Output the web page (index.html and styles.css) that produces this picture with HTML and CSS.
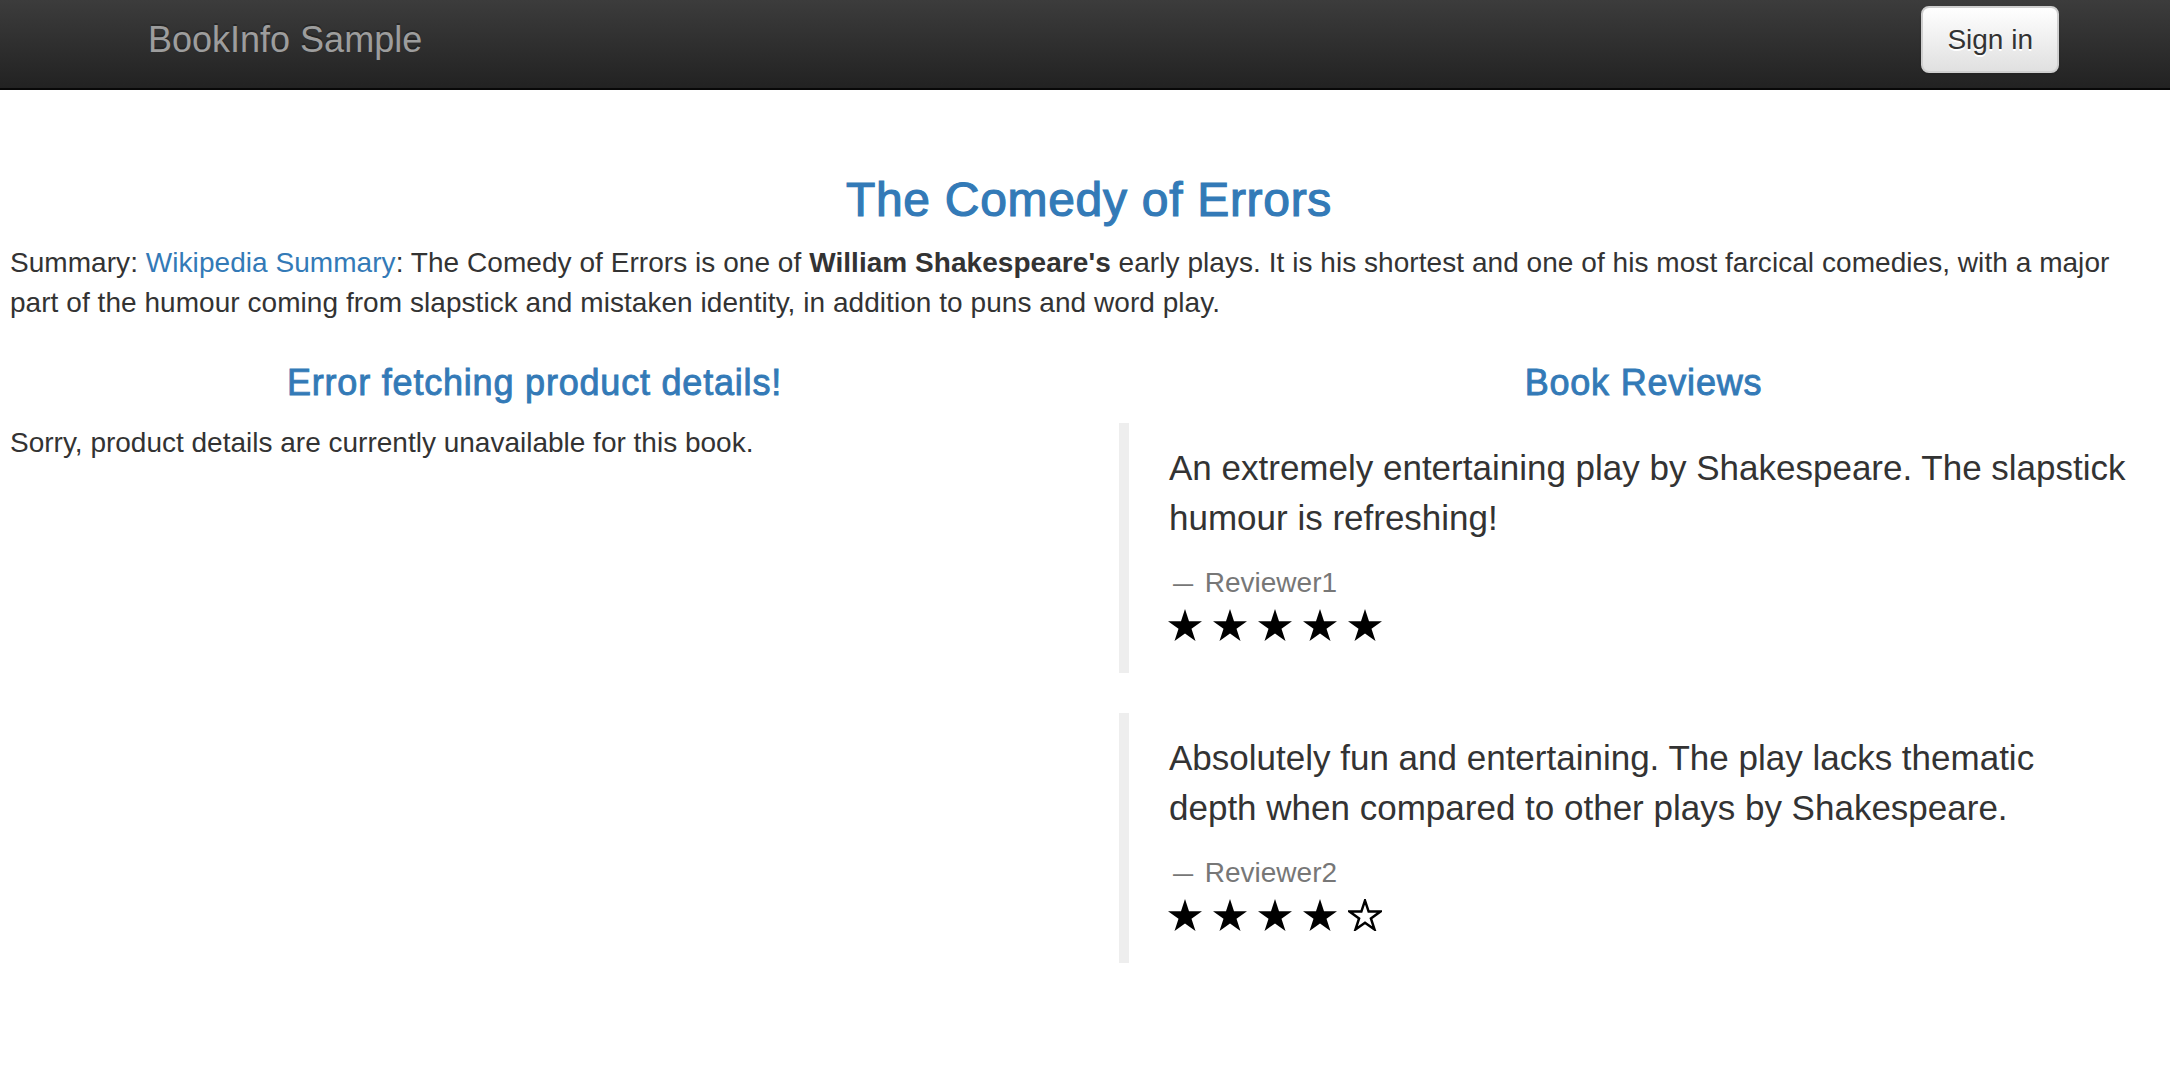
FILE: index.html
```
<!DOCTYPE html>
<html lang="en">
<head>
<meta charset="utf-8">
<title>Simple Bookstore App</title>
<link rel="stylesheet" href="styles.css">
</head>
<body>
<nav class="navbar">
  <a class="brand" href="#">BookInfo Sample</a>
  <button class="btn-signin" type="button">Sign in</button>
</nav>
<main class="page">
  <h3 class="title">The Comedy of Errors</h3>
  <p class="summary">Summary: <a class="link" href="#">Wikipedia Summary</a>: The Comedy of Errors is one of <b>William Shakespeare's</b> early plays. It is his shortest and one of his most farcical comedies, with a major part of the humour coming from slapstick and mistaken identity, in addition to puns and word play.</p>
  <div class="cols">
    <section class="col">
      <h4 class="col-title">Error fetching product details!</h4>
      <p class="plain">Sorry, product details are currently unavailable for this book.</p>
    </section>
    <section class="col">
      <h4 class="col-title">Book Reviews</h4>
      <blockquote class="review">
        <p class="review-text">An extremely entertaining play by Shakespeare. The slapstick humour is refreshing!</p>
        <small class="reviewer"><span class="dash">&mdash;</span>&nbsp;Reviewer1</small>
        <div class="stars">
          <svg class="star" viewBox="0 0 100 95" preserveAspectRatio="none"><polygon points="50,0 61.8,36.3 100,36.3 69.1,58.8 80.9,95.1 50,72.6 19.1,95.1 30.9,58.8 0,36.3 38.2,36.3"/></svg>
          <svg class="star" viewBox="0 0 100 95" preserveAspectRatio="none"><polygon points="50,0 61.8,36.3 100,36.3 69.1,58.8 80.9,95.1 50,72.6 19.1,95.1 30.9,58.8 0,36.3 38.2,36.3"/></svg>
          <svg class="star" viewBox="0 0 100 95" preserveAspectRatio="none"><polygon points="50,0 61.8,36.3 100,36.3 69.1,58.8 80.9,95.1 50,72.6 19.1,95.1 30.9,58.8 0,36.3 38.2,36.3"/></svg>
          <svg class="star" viewBox="0 0 100 95" preserveAspectRatio="none"><polygon points="50,0 61.8,36.3 100,36.3 69.1,58.8 80.9,95.1 50,72.6 19.1,95.1 30.9,58.8 0,36.3 38.2,36.3"/></svg>
          <svg class="star" viewBox="0 0 100 95" preserveAspectRatio="none"><polygon points="50,0 61.8,36.3 100,36.3 69.1,58.8 80.9,95.1 50,72.6 19.1,95.1 30.9,58.8 0,36.3 38.2,36.3"/></svg>
        </div>
      </blockquote>
      <blockquote class="review">
        <p class="review-text">Absolutely fun and entertaining. The play lacks thematic depth when compared to other plays by Shakespeare.</p>
        <small class="reviewer"><span class="dash">&mdash;</span>&nbsp;Reviewer2</small>
        <div class="stars">
          <svg class="star" viewBox="0 0 100 95" preserveAspectRatio="none"><polygon points="50,0 61.8,36.3 100,36.3 69.1,58.8 80.9,95.1 50,72.6 19.1,95.1 30.9,58.8 0,36.3 38.2,36.3"/></svg>
          <svg class="star" viewBox="0 0 100 95" preserveAspectRatio="none"><polygon points="50,0 61.8,36.3 100,36.3 69.1,58.8 80.9,95.1 50,72.6 19.1,95.1 30.9,58.8 0,36.3 38.2,36.3"/></svg>
          <svg class="star" viewBox="0 0 100 95" preserveAspectRatio="none"><polygon points="50,0 61.8,36.3 100,36.3 69.1,58.8 80.9,95.1 50,72.6 19.1,95.1 30.9,58.8 0,36.3 38.2,36.3"/></svg>
          <svg class="star" viewBox="0 0 100 95" preserveAspectRatio="none"><polygon points="50,0 61.8,36.3 100,36.3 69.1,58.8 80.9,95.1 50,72.6 19.1,95.1 30.9,58.8 0,36.3 38.2,36.3"/></svg>
          <svg class="star star-empty" viewBox="-5 -5 110 105" preserveAspectRatio="none"><polygon points="50,0 61.8,36.3 100,36.3 69.1,58.8 80.9,95.1 50,72.6 19.1,95.1 30.9,58.8 0,36.3 38.2,36.3"/></svg>
        </div>
      </blockquote>
    </section>
  </div>
</main>
</body>
</html>
```
FILE: styles.css
```
html, body {
  margin: 0;
  padding: 0;
  background: #fff;
}

body {
  font-family: "Liberation Sans", Arial, Helvetica, sans-serif;
  font-size: 28px;
  line-height: 40px;
  color: #333;
}

.navbar {
  box-sizing: border-box;
  height: 90px;
  display: flex;
  justify-content: space-between;
  align-items: flex-start;
  padding: 0 111px 0 148px;
  background: linear-gradient(to bottom, #3c3c3c 0%, #222 100%);
  border-bottom: 2px solid #080808;
}

.brand {
  margin-top: 20px;
  font-size: 36px;
  line-height: 40px;
  color: #9d9d9d;
  text-decoration: none;
  text-shadow: 0 -2px 0 rgba(0, 0, 0, 0.25);
}

.btn-signin {
  box-sizing: border-box;
  margin-top: 6px;
  height: 67px;
  padding: 0 24px;
  font-family: "Liberation Sans", Arial, Helvetica, sans-serif;
  font-size: 28px;
  line-height: 40px;
  color: #333;
  background: linear-gradient(to bottom, #fff 0%, #e0e0e0 100%);
  border: 2px solid #cfcfcf;
  border-radius: 8px;
  text-shadow: 0 2px 0 #fff;
  box-shadow: inset 0 2px 0 rgba(255, 255, 255, 0.15), 0 2px 2px rgba(0, 0, 0, 0.075);
}

.page {
  padding: 83px 2px 0 10px;
}

.title {
  margin: 0 0 17px;
  font-size: 48px;
  line-height: 53px;
  font-weight: 500;
  letter-spacing: 0.7px;
  color: #337ab7;
  text-align: center;
  -webkit-text-stroke: 1.2px #337ab7;
}

.summary {
  margin: 0 38px 20px 0;
  letter-spacing: 0.05px;
}

.link {
  color: #337ab7;
  text-decoration: none;
}

.cols {
  display: grid;
  grid-template-columns: 1049px 1049px;
  column-gap: 60px;
}

.col-title {
  margin: 20px 0;
  font-size: 36px;
  line-height: 39.6px;
  font-weight: 500;
  letter-spacing: 0.8px;
  color: #337ab7;
  text-align: center;
  -webkit-text-stroke: 0.9px #337ab7;
}

.plain {
  margin: 0;
}

.review {
  margin: 0 -2px 40px 0;
  padding: 20px 40px 20px 40px;
  border-left: 10px solid #eee;
  font-size: 35px;
  line-height: 50px;
}

.review-text {
  margin: 0 0 20px;
}

.reviewer {
  display: block;
  font-size: 28px;
  line-height: 40px;
  color: #777;
}

.dash {
  display: inline-block;
  transform: scaleX(0.72);
}

.stars {
  height: 50px;
  box-sizing: border-box;
  padding-top: 6px;
  display: flex;
  align-items: flex-start;
  gap: 11px;
  margin-left: -1px;
}

.star {
  width: 34px;
  height: 32px;
  display: block;
}

.star polygon {
  fill: #000;
}

.star-empty polygon {
  fill: #fff;
  stroke: #000;
  stroke-width: 8;
  stroke-linejoin: miter;
}
```
